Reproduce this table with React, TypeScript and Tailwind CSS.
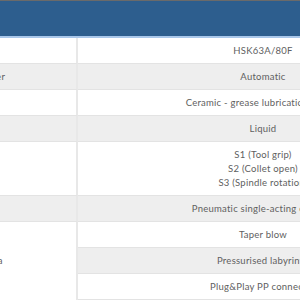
import React from "react";

const rows: { left: string; right: string[]; grey: boolean }[] = [
  { left: "Taper", right: ["HSK63A/80F"], grey: false },
  { left: "Tool changer", right: ["Automatic"], grey: true },
  { left: "Bearings", right: ["Ceramic - grease lubrication for life"], grey: false },
  { left: "Cooling", right: ["Liquid"], grey: true },
  { left: "Sensors", right: ["S1 (Tool grip)", "S2 (Collet open)", "S3 (Spindle rotation)"], grey: false },
  { left: "Unclamp", right: ["Pneumatic single-acting cylinder"], grey: true },
];

const sub = [
  { text: "Pressurised labyrinth", grey: true },
  { text: "Plug&Play PP connector", grey: false },
];

export default function App() {
  return (
    <div
      className="w-[300px] h-[300px] overflow-hidden bg-white text-[9.5px] leading-[14px] tracking-[0.25px] text-[#606060]"
      style={{ fontFamily: "Lato, 'Open Sans', sans-serif" }}
    >
      <div className="ml-[-59px] w-[507px] grid grid-cols-[137px_370px]">
        <div className="col-span-2 h-[38px] bg-[#2d5e8e] border-t border-t-[#6a6a6a] border-b-2 border-b-[#a9c7ea]" />
        {rows.map((r, i) => (
          <React.Fragment key={i}>
            <div
              className={`pl-[8px] pt-[6px] pb-[5px] border-b border-b-[#e3e3e3] border-r-2 border-r-[#e8e8e8] flex items-center ${r.grey ? "bg-[#eeeeee]" : "bg-white"}`}
            >
              {r.left}
            </div>
            <div
              className={`pt-[6px] pb-[5px] border-b border-b-[#e3e3e3] text-center ${r.grey ? "bg-[#eeeeee]" : "bg-white"}`}
            >
              {r.right.map((t, j) => (
                <div key={j}>{t}</div>
              ))}
            </div>
          </React.Fragment>
        ))}
        <div className="row-span-3 pl-[8px] border-r-2 border-r-[#e8e8e8] bg-white flex items-center">
          Spindle area
        </div>
        <div className="pt-[6px] pb-[5px] border-b border-b-[#e3e3e3] text-center bg-white">
          Taper blow
        </div>
        {sub.map((s, i) => (
          <div
            key={i}
            className={`pt-[6px] pb-[5px] border-b border-b-[#e3e3e3] text-center ${s.grey ? "bg-[#eeeeee]" : "bg-white"}`}
          >
            {s.text}
          </div>
        ))}
      </div>
    </div>
  );
}
